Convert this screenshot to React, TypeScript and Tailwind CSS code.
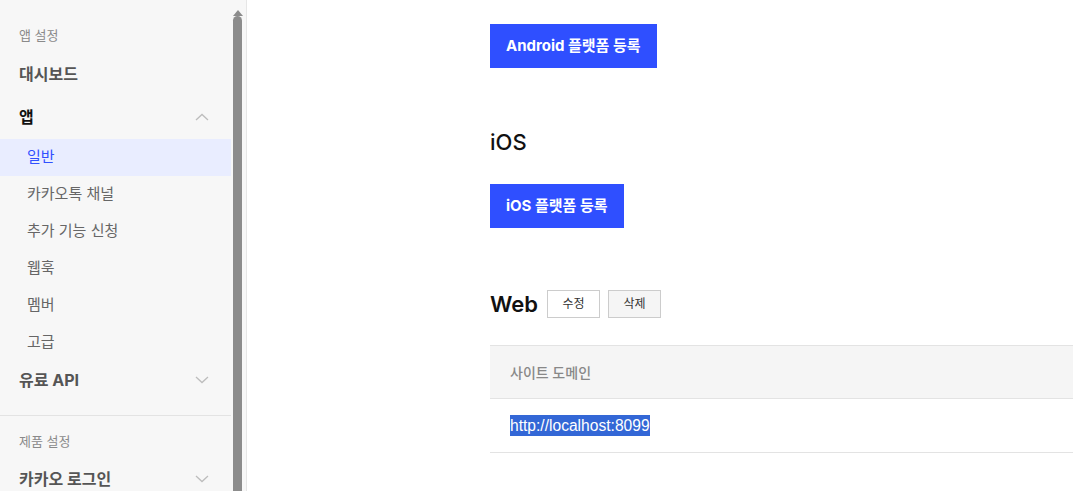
const FONT = { fontFamily: 'Inter, "Noto Sans CJK KR", sans-serif' };

const SUB_ITEMS = ["일반", "카카오톡 채널", "추가 기능 신청", "웹훅", "멤버", "고급"];

function Chevron({ up }: { up?: boolean }) {
  return (
    <svg width="14" height="8" viewBox="0 0 14 8" className="mr-[22px]" aria-hidden="true">
      <path
        d={up ? "M1 7 L7 1.5 L13 7" : "M1 1 L7 6.5 L13 1"}
        fill="none"
        stroke="#bdbdbd"
        strokeWidth="1.3"
      />
    </svg>
  );
}

function Sidebar() {
  return (
    <aside className="flex h-full shrink-0 border-r border-[#e6e6e6] bg-[#f7f7f7]">
      <nav className="flex w-[231px] flex-col">
        <div className="box-content flex h-[36px] items-center px-[19px] pt-[18px] text-[13px] text-[#8a8a8a]">
          앱 설정
        </div>
        <div className="flex h-[40px] items-center px-[19px] text-[16px] font-bold text-[#555]">
          대시보드
        </div>
        <div className="flex h-[45px] items-center justify-between pl-[19px] text-[16px] font-bold text-[#111]">
          <span>앱</span>
          <Chevron up />
        </div>
        {SUB_ITEMS.map((item, i) => (
          <div
            key={item}
            className={
              i === 0
                ? "flex h-[37px] items-center bg-[#e9edff] pl-[27px] text-[15px] text-[#3050ff]"
                : "flex h-[37px] items-center pl-[27px] text-[15px] text-[#666]"
            }
          >
            {item}
          </div>
        ))}
        <div className="flex h-[38px] items-center justify-between pl-[19px] text-[16px] font-bold text-[#555]">
          <span>유료 API</span>
          <Chevron />
        </div>
        <div className="mt-[16px] border-t border-[#e3e3e3]" />
        <div className="pl-[19px] pt-[15px] text-[13px] leading-[20px] text-[#8a8a8a]">제품 설정</div>
        <div className="mt-[17px] flex h-[22px] items-center justify-between pl-[19px] text-[16px] font-bold text-[#555]">
          <span>카카오 로그인</span>
          <Chevron />
        </div>
      </nav>
      <div className="flex w-[15px] flex-col items-center">
        <svg width="10" height="6" viewBox="0 0 10 6" className="mt-[10px] mr-[1px]" aria-hidden="true">
          <path d="M0 6 L5 0 L10 6 Z" fill="#8c8c8c" />
        </svg>
        <div className="mr-[2px] w-[9px] flex-1 rounded-t-[5px] bg-[#8c8c8c]" />
      </div>
    </aside>
  );
}

function PrimaryButton({ children }: { children: React.ReactNode }) {
  return (
    <button className="h-[44px] bg-[#2f4fff] px-[16px] text-[15px] font-bold text-white">
      {children}
    </button>
  );
}

export default function App() {
  return (
    <div className="flex h-[491px] w-[1073px] overflow-hidden bg-white" style={FONT}>
      <Sidebar />
      <main className="flex-1 pl-[243px] pt-[24px]">
        <PrimaryButton>Android 플랫폼 등록</PrimaryButton>

        <h2 className="mt-[59px] text-[22px] font-medium leading-[30px] text-[#111]">iOS</h2>
        <div className="mt-[27px]">
          <PrimaryButton>iOS 플랫폼 등록</PrimaryButton>
        </div>

        <div className="mt-[61px] flex items-center gap-[8px]">
          <h2 className="mr-[1px] text-[22px] font-semibold leading-[30px] text-[#111]">Web</h2>
          <button className="h-[28px] w-[53px] border border-[#cccccc] bg-white text-[12px] text-[#333]">
            수정
          </button>
          <button className="h-[28px] w-[53px] border border-[#cccccc] bg-[#f5f5f5] text-[12px] text-[#333]">
            삭제
          </button>
        </div>

        <div className="mt-[26px] border-t border-[#e3e3e3]">
          <div className="flex h-[53px] items-center border-b border-[#e3e3e3] bg-[#f5f5f5] pl-[20px] text-[14px] font-medium text-[#888]">
            사이트 도메인
          </div>
          <div className="flex h-[54px] items-center border-b border-[#e3e3e3] pl-[20px]">
            <span
              className="bg-[#3367d6] text-[15.6px] leading-[21px] text-white"
              style={{ fontFamily: '"Liberation Sans", Arial, sans-serif' }}
            >
              http://localhost:8099
            </span>
          </div>
        </div>
      </main>
    </div>
  );
}
